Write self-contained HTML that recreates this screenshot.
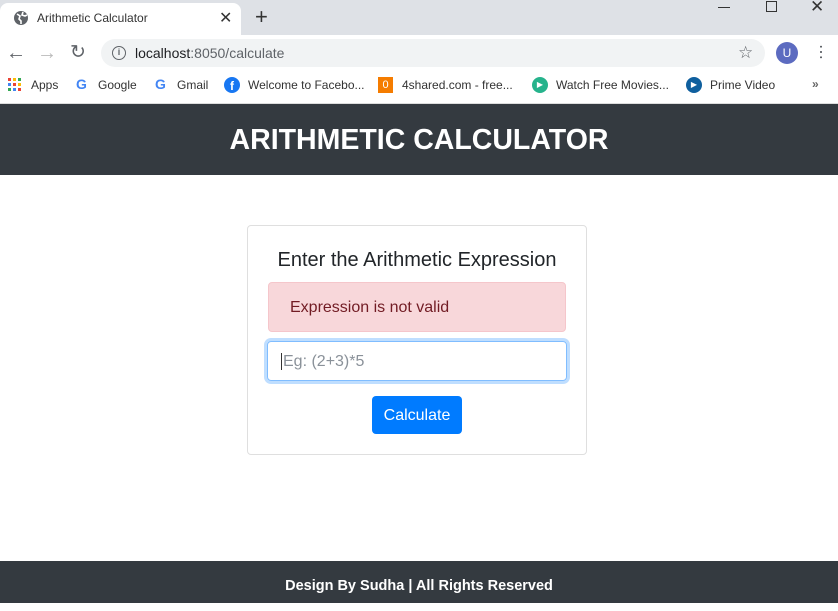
<!DOCTYPE html>
<html><head><meta charset="utf-8"><style>
*{margin:0;padding:0;box-sizing:border-box}
body{width:838px;height:603px;overflow:hidden;font-family:"Liberation Sans",sans-serif;background:#fff;position:relative}
.abs{position:absolute}
.t{font-size:12px;color:#333}
</style></head><body>
<div class="abs" style="left:0;top:0;width:838px;height:35px;background:#dee1e6"></div>
<div class="abs" style="left:0;top:3px;width:241px;height:33px;background:#fff;border-radius:8px 8px 0 0"></div>
<svg class="abs" style="left:13px;top:10px" width="16" height="16" viewBox="0 0 16 16"><circle cx="8" cy="8" r="7" fill="#5f6368"/><path d="M4 4l3 2-1 3 2 2v3M10 2l-1 3 3 1 2-1" stroke="#fff" stroke-width="1.6" fill="none"/></svg>
<div class="abs t" style="left:37px;top:11px">Arithmetic Calculator</div>
<div class="abs" style="left:219px;top:8px;font-size:16px;color:#333">✕</div>
<div class="abs" style="left:255px;top:4px;font-size:22px;color:#333">+</div>
<div class="abs" style="left:718px;top:7px;width:12px;height:1px;background:#333"></div>
<div class="abs" style="left:766px;top:1px;width:11px;height:11px;border:1px solid #333"></div>
<div class="abs" style="left:810px;top:-3px;font-size:17px;color:#333">✕</div>
<div class="abs" style="left:6px;top:43px;font-size:20px;color:#5f6368;line-height:20px">←</div>
<div class="abs" style="left:37px;top:43px;font-size:20px;color:#bbb;line-height:20px">→</div>
<div class="abs" style="left:70px;top:43px;font-size:19px;color:#5f6368;line-height:20px">↻</div>
<div class="abs" style="left:101px;top:39px;width:664px;height:28px;background:#f1f3f4;border-radius:14px"></div>
<div class="abs" style="left:112px;top:46px;width:14px;height:14px;border:1.5px solid #5f6368;border-radius:50%;font-size:9px;text-align:center;line-height:11px;color:#5f6368;font-weight:bold">i</div>
<div class="abs" style="left:135px;top:45px;font-size:14px;color:#202124">localhost<span style="color:#5f6368">:8050/calculate</span></div>
<div class="abs" style="left:738px;top:43px;font-size:17px;color:#5f6368">☆</div>
<div class="abs" style="left:776px;top:42px;width:22px;height:22px;border-radius:50%;background:#5c6bc0;color:#fff;font-size:12px;text-align:center;line-height:22px">U</div>
<div class="abs" style="left:816px;top:44px;font-size:16px;color:#5f6368;line-height:8px;writing-mode:vertical-lr">⋯</div>
<svg class="abs" style="left:8px;top:78px" width="13" height="13"><g fill="#ea4335"><rect x="0" y="0" width="3" height="3"/><rect x="5" y="0" width="3" height="3" fill="#fbbc05"/><rect x="10" y="0" width="3" height="3" fill="#34a853"/><rect x="0" y="5" width="3" height="3" fill="#4285f4"/><rect x="5" y="5" width="3" height="3"/><rect x="10" y="5" width="3" height="3" fill="#fbbc05"/><rect x="0" y="10" width="3" height="3" fill="#34a853"/><rect x="5" y="10" width="3" height="3" fill="#4285f4"/><rect x="10" y="10" width="3" height="3"/></g></svg>
<div class="abs t" style="left:31px;top:78px">Apps</div>
<div class="abs" style="left:76px;top:76px;font-size:14px;font-weight:bold;color:#4285f4">G</div>
<div class="abs t" style="left:98px;top:78px">Google</div>
<div class="abs" style="left:155px;top:76px;font-size:14px;font-weight:bold;color:#4285f4">G</div>
<div class="abs t" style="left:177px;top:78px">Gmail</div>
<div class="abs" style="left:224px;top:77px;width:16px;height:16px;border-radius:50%;background:#1877f2;color:#fff;font-size:12px;font-weight:bold;text-align:center;line-height:18px">f</div>
<div class="abs t" style="left:248px;top:78px">Welcome to Facebo...</div>
<div class="abs" style="left:378px;top:77px;width:15px;height:16px;background:#f57c00;color:#fff;font-size:11px;text-align:center;line-height:16px">0</div>
<div class="abs t" style="left:402px;top:78px">4shared.com - free...</div>
<div class="abs" style="left:532px;top:77px;width:16px;height:16px;border-radius:50%;background:#26b38c;color:#fff;font-size:8px;text-align:center;line-height:16px">▶</div>
<div class="abs t" style="left:556px;top:78px">Watch Free Movies...</div>
<div class="abs" style="left:686px;top:77px;width:16px;height:16px;border-radius:50%;background:#0f5f9e;color:#fff;font-size:8px;text-align:center;line-height:16px">▶</div>
<div class="abs t" style="left:710px;top:78px">Prime Video</div>
<div class="abs t" style="left:812px;top:77px;font-weight:bold;color:#666">»</div>
<div class="abs" style="left:0;top:103px;width:838px;height:1px;background:#ddd"></div>
<div class="abs" style="left:0;top:104px;width:838px;height:71px;background:#343a40;color:#fff;font-size:28.5px;font-weight:bold;text-align:center;line-height:73px">ARITHMETIC CALCULATOR</div>
<div class="abs" style="left:247px;top:225px;width:340px;height:230px;border:1px solid #dfdfdf;border-radius:4px"></div>
<div class="abs" style="left:247px;top:249px;width:340px;text-align:center;font-size:20px;color:#212529;font-weight:500">Enter the Arithmetic Expression</div>
<div class="abs" style="left:268px;top:282px;width:298px;height:50px;background:#f8d7da;border:1px solid #f5c6cb;border-radius:4px;color:#721c24;font-size:16px;padding:16px 0 0 21px">Expression is not valid</div>
<div class="abs" style="left:267px;top:341px;width:300px;height:40px;border:1px solid #80bdff;border-radius:4px;box-shadow:0 0 0 3px rgba(0,123,255,.25);font-size:16px;color:#8a9199;padding:11px 0 0 13px"><span style="border-left:1px solid #333;padding-left:1px">Eg: (2+3)*5</span></div>
<div class="abs" style="left:372px;top:396px;width:90px;height:38px;background:#007bff;border-radius:4px;color:#fff;font-size:16px;text-align:center;line-height:40px">Calculate</div>
<div class="abs" style="left:0;top:561px;width:838px;height:42px;background:#343a40;color:#fff;font-size:14.5px;font-weight:bold;text-align:center;line-height:50px">Design By Sudha | All Rights Reserved</div>
</body></html>
